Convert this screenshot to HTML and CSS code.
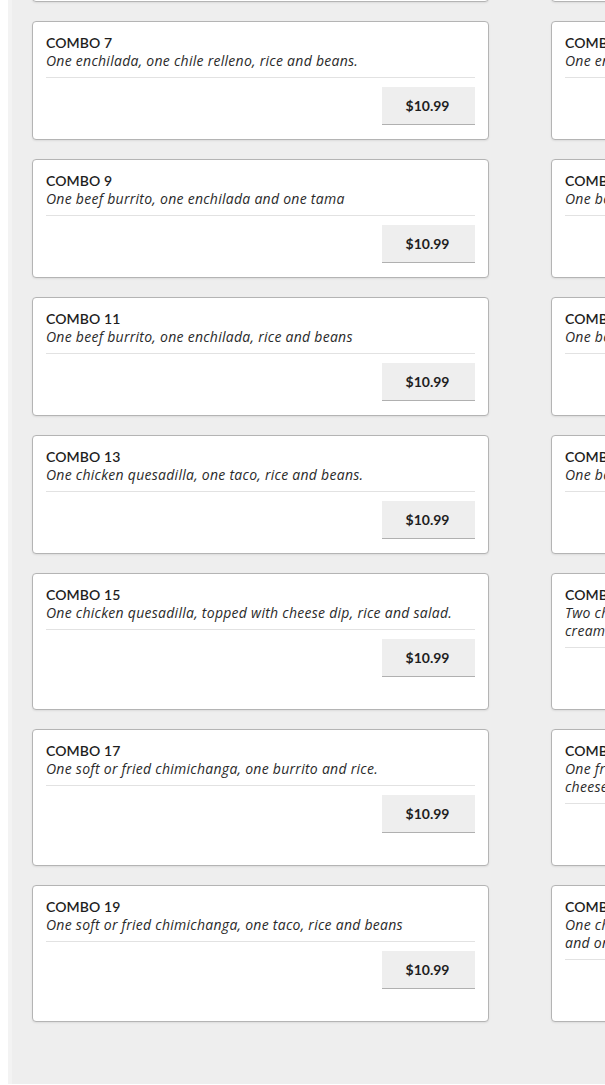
FILE: index.html
```html
<!DOCTYPE html>
<html lang="en">
<head>
<meta charset="utf-8">
<title>Combos</title>
<link rel="stylesheet" href="styles.css">
</head>
<body>
<div class="menu">
  <div class="grid">
    <div class="card"><div class="head"><div class="title">COMBO 5</div><div class="desc">One burrito, one taco and rice.</div></div><div class="foot"><button class="price">$10.99</button></div></div>
    <div class="card"><div class="head"><div class="title">COMBO 6</div><div class="desc">One enchilada, one taco and beans.</div></div><div class="foot"><button class="price">$10.99</button></div></div>

    <div class="card"><div class="head"><div class="title">COMBO 7</div><div class="desc">One enchilada, one chile relleno, rice and beans.</div></div><div class="foot"><button class="price">$10.99</button></div></div>
    <div class="card"><div class="head"><div class="title">COMBO 8</div><div class="desc">One enchilada, one taco, rice and beans.</div></div><div class="foot"><button class="price">$10.99</button></div></div>

    <div class="card"><div class="head"><div class="title">COMBO 9</div><div class="desc">One beef burrito, one enchilada and one tama</div></div><div class="foot"><button class="price">$10.99</button></div></div>
    <div class="card"><div class="head"><div class="title">COMBO 10</div><div class="desc">One beef burrito, one taco, rice and beans.</div></div><div class="foot"><button class="price">$10.99</button></div></div>

    <div class="card"><div class="head"><div class="title">COMBO 11</div><div class="desc">One beef burrito, one enchilada, rice and beans</div></div><div class="foot"><button class="price">$10.99</button></div></div>
    <div class="card"><div class="head"><div class="title">COMBO 12</div><div class="desc">One beef burrito, one chile relleno and rice.</div></div><div class="foot"><button class="price">$10.99</button></div></div>

    <div class="card"><div class="head"><div class="title">COMBO 13</div><div class="desc">One chicken quesadilla, one taco, rice and beans.</div></div><div class="foot"><button class="price">$10.99</button></div></div>
    <div class="card"><div class="head"><div class="title">COMBO 14</div><div class="desc">One beef quesadilla, one taco, rice and beans.</div></div><div class="foot"><button class="price">$10.99</button></div></div>

    <div class="card"><div class="head"><div class="title">COMBO 15</div><div class="desc">One chicken quesadilla, topped with cheese dip, rice and salad.</div></div><div class="foot"><button class="price">$10.99</button></div></div>
    <div class="card"><div class="head"><div class="title">COMBO 16</div><div class="desc">Two chicken enchiladas topped with cheese dip, lettuce and sour<br>cream.</div></div><div class="foot"><button class="price">$10.99</button></div></div>

    <div class="card"><div class="head"><div class="title">COMBO 17</div><div class="desc">One soft or fried chimichanga, one burrito and rice.</div></div><div class="foot"><button class="price">$10.99</button></div></div>
    <div class="card"><div class="head"><div class="title">COMBO 18</div><div class="desc">One fried chimichanga with rice and beans, topped with melted<br>cheese.</div></div><div class="foot"><button class="price">$10.99</button></div></div>

    <div class="card"><div class="head"><div class="title">COMBO 19</div><div class="desc">One soft or fried chimichanga, one taco, rice and beans</div></div><div class="foot"><button class="price">$10.99</button></div></div>
    <div class="card"><div class="head"><div class="title">COMBO 20</div><div class="desc">One chicken burrito, one chicken enchilada, one taco, rice<br>and one tamale.</div></div><div class="foot"><button class="price">$10.99</button></div></div>
  </div>
</div>
</body>
</html>
```
FILE: styles.css
```css
html, body {
  overflow: hidden;
}
body {
  margin: 0 0 0 8px;
  background: #ffffff;
  font-family: "Lato", "Open Sans", sans-serif;
  color: #1e1e1e;
}
.menu {
  background: #eeeeee;
  border-left: 4px solid #f3f3f3;
  padding: 0 0 62px 20px;
  overflow: hidden;
  height: 1084px;
  box-sizing: border-box;
}
.grid {
  display: grid;
  grid-template-columns: 457px 457px;
  column-gap: 62px;
  row-gap: 19px;
  margin-top: -117px;
  width: 1100px;
}
.card {
  background: #ffffff;
  border: 1px solid #b4b4b4;
  border-radius: 4px;
  box-shadow: 0 1px 2px rgba(0,0,0,0.08);
  padding: 12px 13px 14px 13px;
  display: flex;
  flex-direction: column;
}
.head {
  border-bottom: 1px solid #e2e2e2;
  padding-bottom: 7px;
}
.title {
  font-size: 14px;
  line-height: 18px;
  font-weight: 600;
  letter-spacing: 0.1px;
}
.desc {
  font-family: "Open Sans", "Lato", sans-serif;
  font-size: 14px;
  line-height: 18px;
  letter-spacing: 0.27px;
  font-style: italic;
  color: #2a2a2a;
}
.foot {
  display: flex;
  justify-content: flex-end;
  margin-top: 9px;
}
.price {
  width: 93px;
  height: 38px;
  background: #eeeeee;
  border: none;
  border-bottom: 1px solid #b0b0b0;
  border-radius: 0;
  font-family: inherit;
  font-size: 14px;
  font-weight: 700;
  color: #1e1e1e;
  padding: 0 2px 0 0;
}
```
